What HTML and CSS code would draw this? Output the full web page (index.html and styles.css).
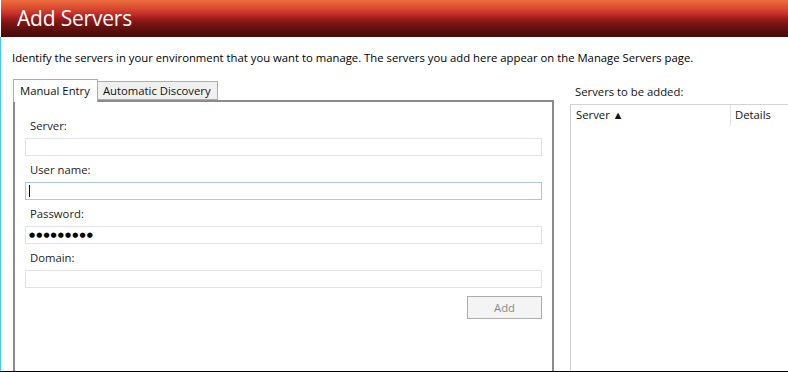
FILE: index.html
```html
<!DOCTYPE html>
<html>
<head>
<meta charset="utf-8">
<link rel="stylesheet" href="styles.css">
</head>
<body>
<div class="window">
  <header class="banner"><h1 class="title">Add Servers</h1></header>
  <div class="content">
    <p class="intro">Identify the servers in your environment that you want to manage. The servers you add here appear on the Manage Servers page.</p>
    <div class="columns">
      <section class="left">
        <div class="tabs">
          <div class="tab tab-active">Manual Entry</div>
          <div class="tab">Automatic Discovery</div>
        </div>
        <div class="panel">
          <div class="lbl lbl-first">Server:</div>
          <div class="field"></div>
          <div class="lbl">User name:</div>
          <div class="field field-focus"><span class="caret"></span></div>
          <div class="lbl">Password:</div>
          <div class="field field-pass">●●●●●●●●●</div>
          <div class="lbl">Domain:</div>
          <div class="field"></div>
          <div class="actions"><button class="btn" disabled>Add</button></div>
        </div>
      </section>
      <section class="right">
        <div class="list-title">Servers to be added:</div>
        <div class="list">
          <div class="list-head">
            <div class="col col-server">Server <span class="sort">▲</span></div>
            <div class="col col-details">Details</div>
          </div>
        </div>
      </section>
    </div>
  </div>
</div>
</body>
</html>
```
FILE: styles.css
```css
html, body {
  margin: 0;
  padding: 0;
  background: #fff;
}
body {
  width: 788px;
  height: 372px;
  overflow: hidden;
  font-family: "Open Sans", "Noto Sans", sans-serif;
  font-size: 11.3px;
  color: #1a1a1a;
}
.window {
  height: 372px;
  box-sizing: border-box;
  border-bottom: 1px solid #000;
  display: flex;
  flex-direction: column;
  overflow: hidden;
}
.banner {
  height: 37px;
  flex: none;
  margin-left: 1px;
  background: linear-gradient(to bottom, #ef6f3f 0%, #da4b30 22%, #bb2727 42%, #9e1d1a 50%, #7c1612 62%, #5a0f0c 82%, #470b08 100%);
  display: flex;
  align-items: center;
}
.title {
  margin: 0;
  padding-left: 16px;
  font-weight: 400;
  font-size: 21px;
  line-height: 37px;
  color: #fff;
  letter-spacing: -0.2px;
}
.content {
  flex: 1;
  min-height: 0;
  border-left: 1px solid #4cc4f2;
  padding-left: 12px;
  display: flex;
  flex-direction: column;
  overflow: hidden;
}
.intro {
  margin: 13px 0 0 -1px;
  line-height: 16px;
  color: #000;
  white-space: nowrap;
}
.columns {
  margin-top: 13px;
  display: flex;
  gap: 16px;
  flex: 1;
  min-height: 0;
}
.left {
  width: 541px;
  flex: none;
  display: flex;
  flex-direction: column;
}
.tabs {
  display: flex;
  align-items: flex-end;
  height: 21px;
  position: relative;
  z-index: 1;
}
.tab {
  box-sizing: border-box;
  height: 19px;
  line-height: 17px;
  padding: 0 6px 0 5px;
  border: 1px solid #acacac;
  background: #f0f0f0;
  color: #111;
}
.tab-active {
  height: 23px;
  line-height: 21px;
  padding: 0 7px 0 6px;
  background: #fff;
  border-bottom: none;
  margin-bottom: -2px;
  margin-right: -1px;
}
.panel {
  border: 2px solid #8c8c90;
  height: 300px;
  flex: none;
  padding: 0 10px;
  display: flex;
  flex-direction: column;
}
.lbl {
  padding: 6px 0 0 5px;
  height: 16px;
  line-height: 16px;
  margin-bottom: 4px;
  color: #222;
}
.lbl-first {
  padding-top: 16px;
}
.field {
  box-sizing: border-box;
  height: 18px;
  border: 1px solid #e2e2ea;
  background: #fff;
  position: relative;
}
.field-focus {
  border-color: #abc7e3;
}
.caret {
  position: absolute;
  left: 3px;
  top: 2px;
  width: 1px;
  height: 12px;
  background: #000;
}
.field-pass {
  font-family: "DejaVu Sans", sans-serif;
  font-size: 7px;
  line-height: 16px;
  letter-spacing: 1.1px;
  padding-left: 3px;
  color: #000;
}
.actions {
  display: flex;
  justify-content: flex-end;
  margin-top: 8px;
}
.btn {
  box-sizing: border-box;
  width: 75px;
  height: 23px;
  border: 1px solid #adadad;
  background: #f4f4f4;
  color: #8a8a8a;
  font-family: inherit;
  font-size: 11.3px;
  padding: 0;
}
.right {
  flex: none;
  width: 240px;
  display: flex;
  flex-direction: column;
}
.list-title {
  margin-top: 5px;
  padding-left: 5px;
  line-height: 16px;
  color: #111;
}
.list {
  margin-top: 4px;
  border-top: 1px solid #d4d4d4;
  border-left: 1px solid #cfcfcf;
  height: 300px;
  flex: none;
}
.list-head {
  display: flex;
  height: 21px;
}
.col {
  line-height: 20px;
  color: #111;
}
.col-server {
  box-sizing: border-box;
  width: 160px;
  padding-left: 5px;
  border-right: 1px solid #e1e1e1;
}
.col-details {
  padding-left: 4px;
}
.sort {
  font-family: "DejaVu Sans", sans-serif;
  font-size: 8.5px;
  position: relative;
  top: -1px;
  margin-left: 2px;
}
```
